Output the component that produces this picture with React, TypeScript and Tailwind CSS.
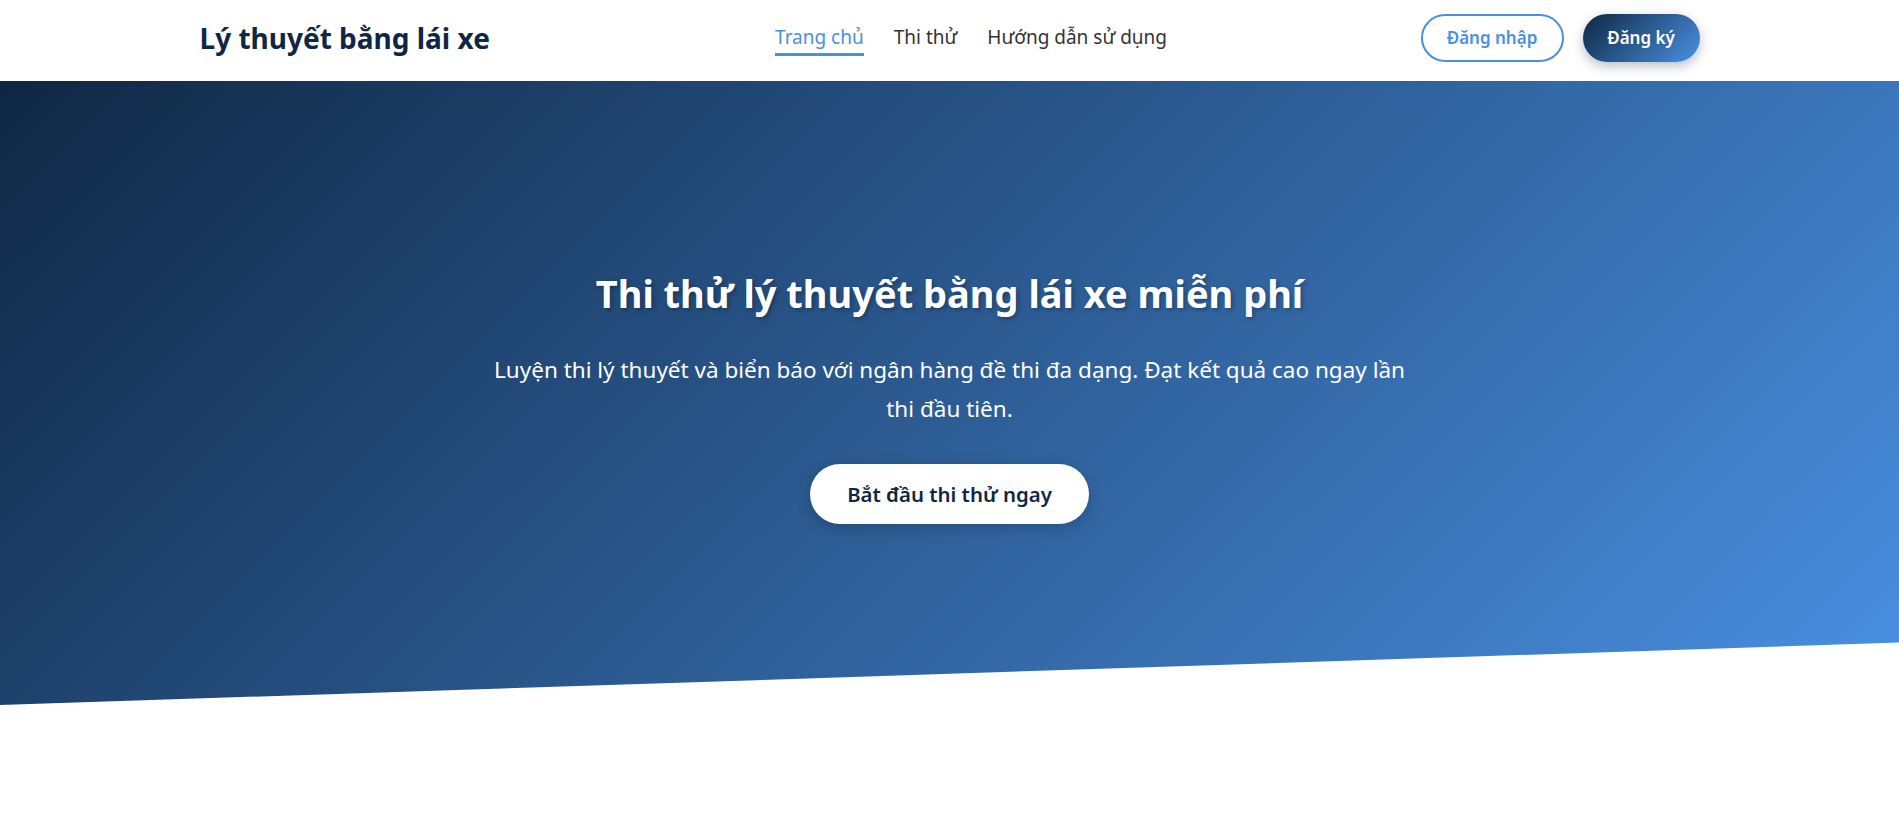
import React from "react";

export default function App() {
  const font = { fontFamily: '"Noto Sans", "Open Sans", sans-serif' };
  return (
    <div className="min-h-[816px] bg-white" style={font}>
      <header className="h-[81px] bg-white">
        <div className="mx-auto flex h-[76px] w-[1500px] items-center justify-between">
          <div className="mt-[2px] w-[322px]">
            <span className="text-[28px] font-bold leading-[1.2] text-[#0f2744]">Lý thuyết bằng lái xe</span>
          </div>
          <nav className="mt-[4px] flex items-center gap-[30px] text-[19px] leading-[27px] text-[#333333]">
            <a className="border-b-[3px] border-[#4a90e2] pb-[2px] text-[#4a90e2]">Trang chủ</a>
            <a className="border-b-[3px] border-transparent pb-[2px]">Thi thử</a>
            <a className="border-b-[3px] border-transparent pb-[2px]">Hướng dẫn sử dụng</a>
          </nav>
          <div className="flex items-center gap-[19px]">
            <button className="flex h-[48px] w-[143px] items-center justify-center rounded-full border-2 border-[#4a90e2] bg-white text-[17px] font-semibold text-[#4a90e2]">
              Đăng nhập
            </button>
            <button className="flex h-[48px] w-[117px] items-center justify-center rounded-full bg-[linear-gradient(135deg,#0f2744,#4a90e2)] text-[17px] font-semibold text-white shadow-[0_4px_12px_rgba(15,39,68,0.3)]">
              Đăng ký
            </button>
          </div>
        </div>
      </header>
      <section className="flex h-[624px] flex-col items-center bg-[linear-gradient(135deg,#0f2744,#4a90e2)] pt-[188px] text-white [clip-path:polygon(0_0,100%_0,100%_90%,0_100%)]">
        <h1 className="text-[38px] font-bold leading-[48px] [text-shadow:2px_2px_4px_rgba(0,0,0,0.3)]">
          Thi thử lý thuyết bằng lái xe miễn phí
        </h1>
        <p className="mt-[33px] w-[925px] text-center text-[22.5px] leading-[39px]">
          Luyện thi lý thuyết và biển báo với ngân hàng đề thi đa dạng. Đạt kết quả cao ngay lần thi đầu tiên.
        </p>
        <button className="mt-[36px] flex h-[60px] w-[279px] items-center justify-center rounded-full bg-white text-[20.4px] font-semibold text-[#0f2744] shadow-[0_4px_15px_rgba(0,0,0,0.2)]">
          Bắt đầu thi thử ngay
        </button>
      </section>
    </div>
  );
}
